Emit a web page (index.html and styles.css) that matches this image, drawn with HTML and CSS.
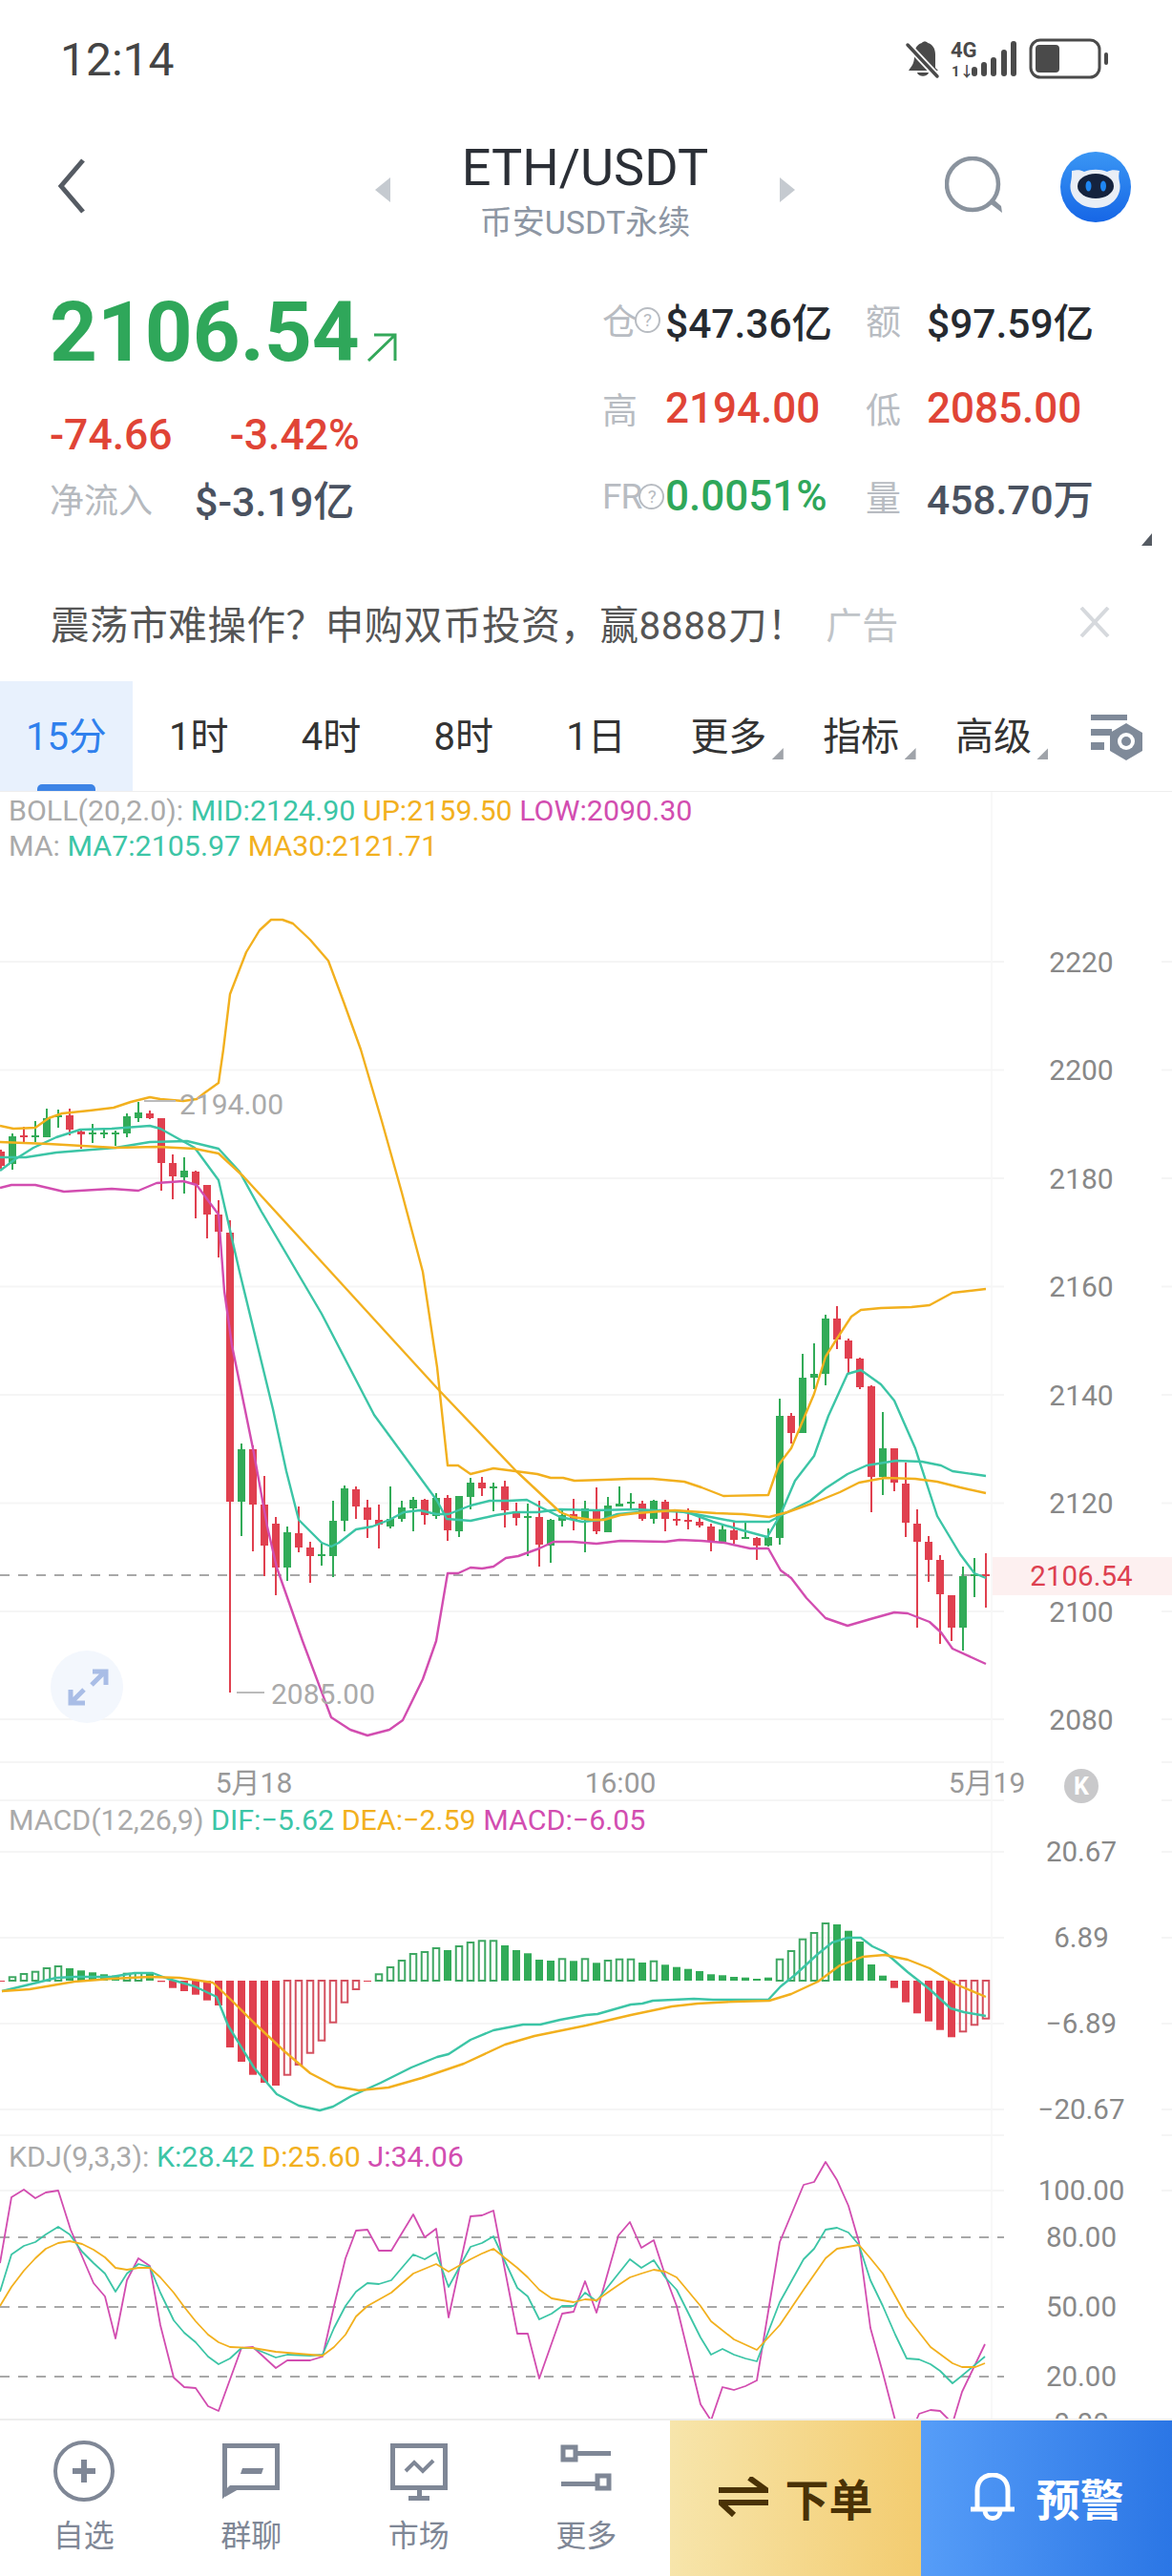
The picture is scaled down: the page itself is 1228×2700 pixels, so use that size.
FILE: index.html
```html
<!DOCTYPE html>
<html lang="zh-CN">
<head>
  <meta charset="UTF-8">
  <meta name="viewport" content="width=device-width, initial-scale=1.0">
  <link rel="stylesheet" href="styles.css">
  <title>ETH/USDT</title>
</head>
<body>
  <div class="page">
    <div class="status-bar">
      <span class="clock">12:14</span>
      <svg class="status-icons" width="215" height="46" viewBox="946 38 215 46">
        <path class="st-fill" d="M954 70c4-5 4-9 4-14 0-7 4-11 8-12 1-2 5-2 6 0 5 1 8 6 8 12v14l3 3h-31z"/>
        <path class="st-fill" d="M961 75h12c-1 5-11 5-12 0z"/>
        <path d="M951 46l31 33" stroke="#fff" stroke-width="7"/>
        <path d="M951 46l31 33" stroke="#4a4a4a" stroke-width="3.5" stroke-linecap="round"/>
        <text class="st-4g" x="996" y="59">4G</text>
        <text class="st-arrows" x="997" y="79">1↓</text>
        <rect class="st-fill" x="1018" y="69" width="6" height="10" rx="3"/>
        <rect class="st-fill" x="1028" y="64" width="6" height="15" rx="3"/>
        <rect class="st-fill" x="1038" y="59" width="6" height="20" rx="3"/>
        <rect class="st-fill" x="1049" y="51" width="6" height="28" rx="3"/>
        <rect class="st-fill" x="1059" y="42" width="6" height="37" rx="3"/>
        <rect x="1080" y="41" width="72" height="39" rx="10" fill="none" stroke="#4a4a4a" stroke-width="3"/>
        <rect class="st-fill" x="1085" y="46" width="25" height="29" rx="4"/>
        <rect class="st-fill" x="1157" y="54" width="4" height="13" rx="2"/>
      </svg>
    </div>

    <div class="nav">
      <svg class="nav-back" width="30" height="58" viewBox="0 0 30 58">
        <path d="M27 2L4 29l23 27" fill="none" stroke="#555b63" stroke-width="5"/>
      </svg>
      <div class="nav-center">
        <span class="tri tri-left"></span>
        <div class="nav-title">
          <div class="pair">ETH/USDT</div>
          <div class="market">币安USDT永续</div>
        </div>
        <span class="tri tri-right"></span>
      </div>
      <div class="nav-icons">
        <svg width="64" height="64" viewBox="0 0 64 64">
          <circle cx="29" cy="29" r="27" fill="none" stroke="#8a939e" stroke-width="4.5"/>
          <path d="M47 49l13 10-1-7-8-7z" fill="#8a939e"/>
        </svg>
        <svg width="74" height="74" viewBox="0 0 74 74">
          <defs>
            <linearGradient id="avatarBg" x1="0" y1="0" x2="0" y2="1">
              <stop offset="0" stop-color="#3a96f4"/>
              <stop offset="1" stop-color="#1666e6"/>
            </linearGradient>
          </defs>
          <circle cx="37" cy="37" r="37" fill="url(#avatarBg)"/>
          <path d="M12 20c6-1 9-1 13 1 7-3 17-3 24 0 4-2 8-2 13-1-1 4-1 7 0 12 3 12-6 27-25 27S8 44 11 32c1-5 1-8 1-12z" fill="#e9eef6"/>
          <ellipse cx="37" cy="36" rx="19" ry="13" fill="#15233e"/>
          <ellipse cx="29.500" cy="36" rx="3" ry="5.500" fill="#1f86f2"/>
          <ellipse cx="45" cy="36" rx="3" ry="5.500" fill="#1f86f2"/>
        </svg>
      </div>
    </div>

    <div class="summary">
      <div class="summary-left">
        <div class="price-row">
          <span class="price">2106.54</span>
          <svg width="32" height="30" viewBox="0 0 32 30">
            <path d="M2 29L30 2M8 2h22v27" fill="none" stroke="#34a85a" stroke-width="3"/>
          </svg>
        </div>
        <div class="change-row">
          <span class="change">-74.66</span>
          <span class="change">-3.42%</span>
        </div>
        <div class="flow-row">
          <span class="flow-label">净流入</span>
          <span class="flow-value">$-3.19亿</span>
        </div>
      </div>
      <div class="stats">
        <span class="stat-label">仓<i class="help">?</i></span><span class="stat-value dark">$47.36亿</span>
        <span class="stat-label">额</span><span class="stat-value dark">$97.59亿</span>
        <span class="stat-label">高</span><span class="stat-value red">2194.00</span>
        <span class="stat-label">低</span><span class="stat-value red">2085.00</span>
        <span class="stat-label fr">FR<i class="help">?</i></span><span class="stat-value green">0.0051%</span>
        <span class="stat-label">量</span><span class="stat-value slate">458.70万</span>
      </div>
      <span class="corner"></span>
    </div>

    <div class="banner">
      <span class="banner-text">震荡市难操作？申购双币投资，赢8888刀！</span>
      <span class="banner-ad">广告</span>
      <svg class="banner-close" width="32" height="32" viewBox="0 0 32 32">
        <path d="M2 1l28 30M30 1L2 31" stroke="#d6d9dd" stroke-width="4"/>
      </svg>
    </div>

    <div class="tabs">
      <span class="tab active">15分</span>
      <span class="tab">1时</span>
      <span class="tab">4时</span>
      <span class="tab">8时</span>
      <span class="tab">1日</span>
      <span class="tab more">更多</span>
      <span class="tab more">指标</span>
      <span class="tab more">高级</span>
      <svg class="tab-settings" width="56" height="50" viewBox="0 0 56 50">
        <path d="M0 0h38v6H0zM0 15h22v7H0zM0 29h14v8H0z" fill="#7f8a99"/>
        <path d="M37 9l17 10v19L37 48 20 38V19z" fill="#7f8a99"/>
        <circle cx="37" cy="28" r="9" fill="#fff"/>
        <circle cx="37" cy="28" r="5" fill="#7f8a99"/>
      </svg>
    </div>

    <svg id="chart" class="chart" width="1228" height="1705" viewBox="0 830 1228 1705">
      <g id="grid"></g>
      <g id="candles"></g>
      <g id="macd"></g>
      <g id="lines"></g>

      <text class="legend" x="9" y="860">BOLL(20,2.0): <tspan class="c-teal">MID:2124.90</tspan> <tspan class="c-yellow">UP:2159.50</tspan> <tspan class="c-pink">LOW:2090.30</tspan></text>
      <text class="legend" x="9" y="897">MA: <tspan class="c-teal">MA7:2105.97</tspan> <tspan class="c-yellow">MA30:2121.71</tspan></text>
      <text class="legend" x="9" y="1918">MACD(12,26,9) <tspan class="c-teal">DIF:−5.62</tspan> <tspan class="c-yellow">DEA:−2.59</tspan> <tspan class="c-pink">MACD:−6.05</tspan></text>
      <text class="legend" x="9" y="2271">KDJ(9,3,3): <tspan class="c-teal">K:28.42</tspan> <tspan class="c-yellow">D:25.60</tspan> <tspan class="c-pink">J:34.06</tspan></text>

      <path class="mark-dash" d="M151 1154h33M248 1774h29"/>
      <text class="mark" x="188" y="1168">2194.00</text>
      <text class="mark" x="284" y="1786">2085.00</text>

      <text class="axis" x="1133" y="1019">2220</text>
      <text class="axis" x="1133" y="1132">2200</text>
      <text class="axis" x="1133" y="1246">2180</text>
      <text class="axis" x="1133" y="1359">2160</text>
      <text class="axis" x="1133" y="1473">2140</text>
      <text class="axis" x="1133" y="1586">2120</text>
      <text class="axis" x="1133" y="1700">2100</text>
      <text class="axis" x="1133" y="1813">2080</text>

      <rect class="last-bg" x="1040" y="1632" width="188" height="40"/>
      <text class="last-price" x="1133" y="1662">2106.54</text>

      <text class="time" x="266" y="1879">5月18</text>
      <text class="time" x="650" y="1879">16:00</text>
      <text class="time" x="1034" y="1879">5月19</text>

      <circle cx="1133" cy="1872" r="18" fill="#c9c9cb"/>
      <text class="kbtn" x="1133" y="1881">K</text>

      <circle cx="91" cy="1768" r="38" fill="#f3f7fd"/>
      <path class="expand" d="M96 1766l14-14M97 1752h14v14M88 1771l-14 14M74 1771v14h15"/>

      <text class="axis-sm" x="1133" y="1951">20.67</text>
      <text class="axis-sm" x="1133" y="2041">6.89</text>
      <text class="axis-sm" x="1133" y="2131">−6.89</text>
      <text class="axis-sm" x="1133" y="2221">−20.67</text>

      <text class="axis-sm" x="1133" y="2306">100.00</text>
      <text class="axis-sm" x="1133" y="2355">80.00</text>
      <text class="axis-sm" x="1133" y="2428">50.00</text>
      <text class="axis-sm" x="1133" y="2501">20.00</text>
      <text class="axis-sm" x="1133" y="2550">0.00</text>
    </svg>

    <div class="footer">
      <div class="foot-item">
        <svg width="70" height="66" viewBox="0 0 70 66">
          <circle cx="35" cy="33" r="30" fill="none" stroke="#7f8796" stroke-width="4"/>
          <path d="M23 30h9v-9h6v9h9v6h-9v9h-6v-9h-9z" fill="#7f8796"/>
        </svg>
        <span>自选</span>
      </div>
      <div class="foot-item">
        <svg width="70" height="66" viewBox="0 0 70 66">
          <path d="M7.500 6.500h55v44H14l-6.500 6z" fill="none" stroke="#7f8796" stroke-width="5"/>
          <path d="M8 52h14l-14 8z" fill="#7f8796"/>
          <path d="M24 36h22l2-6H26z" fill="#7f8796"/>
        </svg>
        <span>群聊</span>
      </div>
      <div class="foot-item">
        <svg width="70" height="66" viewBox="0 0 70 66">
          <rect x="7.500" y="6.500" width="55" height="44" fill="none" stroke="#7f8796" stroke-width="5"/>
          <path d="M33 52h5v8h-5zM24 59h22v5H24z" fill="#7f8796"/>
          <path d="M21 33l9-9 9 9 11-11" fill="none" stroke="#7f8796" stroke-width="4"/>
        </svg>
        <span>市场</span>
      </div>
      <div class="foot-item">
        <svg width="70" height="66" viewBox="0 0 70 66">
          <rect x="11" y="8" width="13" height="13" fill="none" stroke="#7f8796" stroke-width="5"/>
          <path d="M26 12h35v5H26zM9 44h36v5H9z" fill="#7f8796"/>
          <rect x="47" y="38" width="12" height="13" fill="none" stroke="#7f8796" stroke-width="5"/>
        </svg>
        <span>更多</span>
      </div>
      <div class="foot-btn order">
        <svg width="52" height="42" viewBox="0 0 52 42">
          <path d="M0 14h50L32 1M52 27H2l14 13" fill="none" stroke="#4a3206" stroke-width="6"/>
        </svg>
        <span>下单</span>
      </div>
      <div class="foot-btn alert">
        <svg width="48" height="50" viewBox="0 0 48 50">
          <path d="M8 38V18C8 8 15 2 24 2s16 6 16 16v20" fill="none" stroke="#fff" stroke-width="5"/>
          <path d="M1 38h46" stroke="#fff" stroke-width="5"/>
          <path d="M16 40c1 10 15 10 16 0" fill="none" stroke="#fff" stroke-width="5"/>
        </svg>
        <span>预警</span>
      </div>
    </div>
  </div>

  <script src="chart.js"></script>
</body>
</html>
```

FILE: styles.css
```css
* {
  box-sizing: border-box;
}

body {
  margin: 0;
  background-color: #fff;
  font-family: Roboto, "Noto Sans CJK SC", sans-serif;
}

.page {
  display: flex;
  flex-direction: column;
  width: 1228px;
  height: 2700px;
  overflow: hidden;
}

/* status bar */
.status-bar {
  display: flex;
  align-items: center;
  justify-content: space-between;
  height: 124px;
  padding: 0 67px 0 63px;
  flex-shrink: 0;
}

.clock {
  font-size: 48px;
  color: #444;
}

.st-fill {
  fill: #4a4a4a;
}

.st-4g {
  font-size: 22px;
  font-weight: 700;
  fill: #4a4a4a;
}

.st-arrows {
  font-size: 15px;
  font-weight: 700;
  fill: #4a4a4a;
}

/* title row */
.nav {
  display: flex;
  align-items: center;
  height: 150px;
  padding-left: 60px;
  flex-shrink: 0;
}

.nav-back {
  margin-right: 303px;
  margin-top: -8px;
}

.nav-center {
  display: flex;
  align-items: center;
  justify-content: space-between;
  width: 440px;
}

.nav-title {
  text-align: center;
}

.pair {
  font-size: 54px;
  line-height: 60px;
  color: #2b2f36;
}

.market {
  font-size: 34px;
  line-height: 40px;
  margin-top: 7px;
  color: #8d96a3;
}

.tri {
  width: 0;
  height: 0;
  border-top: 13px solid transparent;
  border-bottom: 13px solid transparent;
}

.tri-left {
  border-right: 16px solid #c5cad0;
}

.tri-right {
  border-left: 16px solid #c5cad0;
}

.nav-icons {
  display: flex;
  align-items: center;
  gap: 57px;
  margin-left: 157px;
  margin-top: -6px;
}

/* price summary */
.summary {
  position: relative;
  display: flex;
  height: 326px;
  padding: 34px 0 0 52px;
  flex-shrink: 0;
}

.summary-left {
  width: 579px;
}

.price-row {
  display: flex;
  align-items: flex-end;
  height: 80px;
  gap: 7px;
}

.price {
  font-size: 87px;
  line-height: 80px;
  font-weight: 700;
  color: #2fa75a;
}

.price-row svg {
  margin-bottom: 9px;
}

.change-row {
  display: flex;
  gap: 60px;
  margin-top: 43px;
}

.change {
  font-size: 44.500px;
  line-height: 50px;
  font-weight: 500;
  color: #e04436;
}

.flow-row {
  display: flex;
  align-items: center;
  gap: 44px;
  margin-top: 16px;
  height: 50px;
}

.flow-label {
  font-size: 36px;
  color: #b5b9be;
}

.flow-value {
  font-size: 43px;
  font-weight: 500;
  color: #4a5260;
}

.stats {
  display: grid;
  grid-template-columns: 66px 210px 64px auto;
  grid-auto-rows: 50px;
  row-gap: 42.500px;
  align-items: center;
  padding-top: 2px;
}

.stat-label {
  display: flex;
  align-items: center;
  font-size: 37px;
  color: #b8bcc2;
}

.stat-label.fr {
  letter-spacing: -1px;
}

.help {
  display: inline-flex;
  align-items: center;
  justify-content: center;
  width: 27px;
  height: 27px;
  margin-left: -3px;
  flex-shrink: 0;
  border: 2px solid #b8bcc2;
  border-radius: 50%;
  font-size: 19px;
  font-style: normal;
}

.stat-value {
  font-size: 44px;
  font-weight: 500;
  white-space: nowrap;
}

.stat-value.dark {
  font-size: 42.500px;
  color: #262a30;
}

.stat-value.red {
  color: #e04436;
}

.stat-value.green {
  color: #2fa75a;
}

.stat-value.slate {
  font-size: 42.500px;
  color: #4a5260;
}

.corner {
  position: absolute;
  left: 1196px;
  top: 285px;
  width: 11px;
  height: 13px;
  background-color: #555b63;
  clip-path: polygon(100% 0, 100% 100%, 0 100%);
}

/* ad banner */
.banner {
  display: flex;
  align-items: center;
  height: 114px;
  padding: 0 65px 10px 53px;
  flex-shrink: 0;
}

.banner-text {
  font-size: 40.500px;
  letter-spacing: 0.600px;
  color: #555;
  white-space: nowrap;
}

.banner-ad {
  margin-left: 20px;
  font-size: 38px;
  color: #c0c4c8;
}

.banner-close {
  margin-left: auto;
}

/* period tabs */
.tabs {
  display: flex;
  align-items: stretch;
  height: 116px;
  border-bottom: 1px solid #eee;
  flex-shrink: 0;
}

.tab {
  position: relative;
  display: flex;
  align-items: center;
  justify-content: center;
  width: 138.800px;
  padding-bottom: 5px;
  font-size: 40px;
  color: #333;
}

.tab.active {
  background-color: #e8f1fd;
  color: #2f80ed;
}

.tab.active::after {
  content: "";
  position: absolute;
  left: 39px;
  bottom: 0;
  width: 61px;
  height: 7px;
  border-radius: 5px 5px 0 0;
  background-color: #3d84e6;
}

.tab.more::after {
  content: "";
  position: absolute;
  right: 12px;
  bottom: 33px;
  width: 12px;
  height: 12px;
  background-color: #a0a4aa;
  clip-path: polygon(100% 0, 100% 100%, 0 100%);
}

.tab-settings {
  align-self: center;
  margin-left: 33px;
  margin-top: 5px;
}

/* chart */
.chart {
  display: block;
  flex-shrink: 0;
}

.grid-line {
  stroke: #f5f5f5;
  stroke-width: 2;
}

.axis-line {
  stroke: #f6f6f6;
  stroke-width: 1.500;
}

.dash-line {
  stroke: #a8a8a8;
  stroke-width: 2;
  stroke-dasharray: 10 9;
}

.wick {
  stroke-width: 2;
}

.up {
  fill: #32ab58;
  stroke: #32ab58;
}

.down {
  fill: #e0404f;
  stroke: #e0404f;
}

.hollow {
  fill: none;
  stroke-width: 2;
}

.up.hollow {
  fill: none;
  stroke: #3fa863;
}

.down.hollow {
  fill: none;
  stroke: #d4505f;
}

.line {
  fill: none;
  stroke-width: 2.400;
  stroke-linejoin: round;
}

.line.thin {
  stroke-width: 1.800;
}

.teal {
  stroke: #3cc5a6;
}

.yellow {
  stroke: #f2b01e;
}

.pink {
  stroke: #d24db0;
}

.legend {
  font-size: 30.400px;
  fill: #aaa;
}

.c-teal {
  fill: #3cc5a6;
}

.c-yellow {
  fill: #f2b01e;
}

.c-pink {
  fill: #d24db0;
}

.mark {
  font-size: 30px;
  fill: #aaa;
}

.mark-dash {
  stroke: #bbb;
  stroke-width: 2;
}

.axis {
  font-size: 30px;
  fill: #888;
  text-anchor: middle;
}

.axis-sm {
  font-size: 29.500px;
  fill: #888;
  text-anchor: middle;
}

.last-bg {
  fill: #fdf0f0;
}

.last-price {
  font-size: 29.500px;
  fill: #dd4150;
  text-anchor: middle;
}

.time {
  font-size: 30px;
  fill: #999;
  text-anchor: middle;
}

.kbtn {
  font-size: 25px;
  font-weight: 700;
  fill: #fff;
  text-anchor: middle;
}

.expand {
  fill: none;
  stroke: #a9bde6;
  stroke-width: 5;
}

/* bottom bar */
.footer {
  display: flex;
  height: 165px;
  flex-shrink: 0;
  border-top: 2px solid #eee;
}

.foot-item {
  display: flex;
  flex-direction: column;
  align-items: center;
  width: 175.500px;
  padding-top: 20px;
  font-size: 32px;
  line-height: 40px;
  color: #7f8796;
}

.foot-item span {
  margin-top: 15px;
}

.foot-btn {
  display: flex;
  align-items: center;
  justify-content: center;
  width: 263px;
  padding-bottom: 4px;
  font-weight: 700;
}

.order {
  gap: 18px;
  font-size: 46px;
  color: #4a3206;
  background-image: linear-gradient(to right, #f7e5ab, #f3cc70);
}

.alert {
  gap: 22px;
  font-size: 46px;
  color: #fff;
  background-image: linear-gradient(to right, #569df8, #2b76e5);
}
```

FILE: chart.js
```js
var svgNS = 'http://www.w3.org/2000/svg';

// x position of candle number i, every candle is 12px apart
function slotX(i) {
  return 1 + 12 * i;
}

function addEl(parent, tag, attrs) {
  var el = document.createElementNS(svgNS, tag);
  for (var key in attrs) {
    el.setAttribute(key, attrs[key]);
  }
  parent.appendChild(el);
  return el;
}

// Grid lines
var grid = document.getElementById('grid');
var gridRows = [1008, 1121.5, 1235, 1348.5, 1462, 1575.5, 1689, 1802, 1847, 1887, 1941, 2031, 2121, 2211, 2238, 2296, 2540];
gridRows.forEach(function (y) {
  addEl(grid, 'path', { class: 'grid-line', d: 'M0 ' + y + 'H1052M1217 ' + y + 'H1228' });
});
addEl(grid, 'path', { class: 'axis-line', d: 'M1039 830V2535' });
[1651, 2345, 2418, 2491].forEach(function (y, n) {
  addEl(grid, 'path', { class: 'dash-line', d: 'M0 ' + y + 'H' + (n === 0 ? 1038 : 1052) });
});

// Candles: wick top, wick bottom, body top, body bottom, colour
var candles = [
  [1205, 1225, 1207, 1222, 'd'], [1188, 1226, 1191, 1220, 'u'], [1181, 1197, 1190, 1192, 'd'],
  [1175, 1197, 1190, 1192, 'u'], [1162, 1192, 1172, 1192, 'u'], [1163, 1182, 1169, 1171, 'u'],
  [1162, 1190, 1169, 1184, 'd'], [1185, 1204, 1186, 1189, 'd'], [1178, 1198, 1187, 1189, 'u'],
  [1183, 1193, 1187, 1189, 'u'], [1185, 1201, 1187, 1189, 'u'], [1167, 1192, 1170, 1188, 'u'],
  [1155, 1176, 1166, 1172, 'u'], [1164, 1173, 1167, 1172, 'd'], [1172, 1248, 1172, 1219, 'd'],
  [1210, 1257, 1219, 1233, 'd'], [1213, 1251, 1227, 1234, 'u'], [1227, 1277, 1228, 1242, 'd'],
  [1242, 1298, 1242, 1273, 'd'], [1258, 1318, 1273, 1291, 'd'], [1279, 1774, 1292, 1574, 'd'],
  [1513, 1610, 1519, 1574, 'u'], [1515, 1626, 1519, 1577, 'd'], [1547, 1652, 1577, 1620, 'd'],
  [1590, 1672, 1597, 1643, 'd'], [1600, 1657, 1606, 1643, 'u'], [1579, 1627, 1607, 1622, 'd'],
  [1616, 1659, 1622, 1631, 'd'], [1618, 1641, 1629, 1631, 'u'], [1573, 1653, 1594, 1631, 'u'],
  [1557, 1605, 1560, 1594, 'u'], [1558, 1592, 1561, 1579, 'd'], [1572, 1612, 1580, 1593, 'd'],
  [1577, 1623, 1593, 1598, 'd'], [1558, 1602, 1592, 1600, 'u'], [1573, 1595, 1580, 1592, 'u'],
  [1569, 1605, 1572, 1581, 'u'], [1571, 1598, 1572, 1588, 'd'], [1565, 1592, 1570, 1589, 'u'],
  [1567, 1615, 1570, 1604, 'd'], [1568, 1611, 1568, 1605, 'u'], [1549, 1582, 1554, 1569, 'u'],
  [1548, 1568, 1554, 1560, 'd'], [1554, 1584, 1558, 1560, 'u'], [1552, 1601, 1558, 1583, 'd'],
  [1575, 1599, 1584, 1591, 'd'], [1576, 1631, 1589, 1591, 'u'], [1573, 1642, 1590, 1619, 'd'],
  [1592, 1638, 1593, 1620, 'u'], [1583, 1600, 1588, 1594, 'u'], [1571, 1604, 1587, 1593, 'd'],
  [1573, 1627, 1581, 1593, 'u'], [1559, 1608, 1582, 1605, 'd'], [1569, 1606, 1578, 1606, 'u'],
  [1558, 1579, 1576, 1579, 'u'], [1565, 1582, 1574, 1576, 'u'], [1573, 1594, 1576, 1592, 'd'],
  [1572, 1597, 1573, 1592, 'u'], [1572, 1605, 1574, 1592, 'd'], [1584, 1599, 1592, 1594, 'd'],
  [1581, 1603, 1593, 1595, 'd'], [1590, 1601, 1595, 1599, 'd'], [1597, 1626, 1600, 1615, 'd'],
  [1598, 1618, 1603, 1616, 'u'], [1595, 1618, 1604, 1614, 'd'], [1595, 1613, 1611, 1613, 'u'],
  [1611, 1635, 1612, 1620, 'd'], [1602, 1621, 1611, 1620, 'u'], [1466, 1619, 1484, 1612, 'u'],
  [1481, 1513, 1484, 1502, 'd'], [1419, 1502, 1444, 1502, 'u'], [1408, 1456, 1440, 1444, 'u'],
  [1378, 1452, 1382, 1440, 'u'], [1369, 1414, 1382, 1404, 'd'], [1403, 1440, 1405, 1424, 'd'],
  [1423, 1456, 1424, 1454, 'd'], [1452, 1585, 1453, 1548, 'd'], [1480, 1567, 1518, 1548, 'u'],
  [1518, 1563, 1518, 1554, 'd'], [1533, 1611, 1555, 1596, 'd'], [1582, 1706, 1597, 1616, 'd'],
  [1610, 1658, 1616, 1635, 'd'], [1630, 1723, 1635, 1671, 'd'], [1672, 1720, 1672, 1706, 'd'],
  [1642, 1730, 1652, 1706, 'u'], [1633, 1674, 1650, 1652, 'u'], [1628, 1685, 1650, 1652, 'd']
];

var candleGroup = document.getElementById('candles');
candles.forEach(function (c, i) {
  var x = slotX(i);
  var cls = c[4] === 'u' ? 'up' : 'down';
  addEl(candleGroup, 'path', { class: cls + ' wick', d: 'M' + x + ' ' + c[0] + 'V' + c[1] });
  addEl(candleGroup, 'rect', { class: cls, x: x - 4, y: c[2], width: 8, height: c[3] - c[2], 'stroke-width': 0 });
});

// MACD bars from the zero line at 2076, negative is down. h means hollow
var macdBars = [
  -1, '3.7h', '7h', '9.3h', '13h', '15h', 13, 10.7, 8.7, 6.7, 5.3, '7.3h', '8h', 7.3,
  -1.3, -7.7, -11, -14.7, -20.7, -26, -70, -85, -98.7, -107, -110,
  '-98.7h', '-88h', '-75.7h', '-62.7h', '-43.7h', '-22.7h', '-9h', -1,
  '6.7h', '14h', '21h', '28h', '30h', '34h', 32, '36h', '40h', '41.7h', '41.7h',
  37, 32, 28.7, 22, 21, '22.7h', 20.7, '22.7h', 18.7, '21h', '22.3h', '22.3h', 19, '20.3h',
  16.7, 14.3, 12.3, 10, 6.7, 5.7, 4, 3.3, 2, 3.3,
  '22.3h', '31h', '43.3h', '50h', '60h', 59, 52.3, 41, 17, 5.3,
  -7.7, -22.7, -34.3, -42.7, -51.7, -59.3, '-53.3h', '-46.3h', '-39.7h'
];

var macdGroup = document.getElementById('macd');
var zeroY = 2076;
macdBars.forEach(function (bar, i) {
  var hollow = typeof bar === 'string';
  var value = parseFloat(bar);
  var cls = value > 0 ? 'up' : 'down';
  var h = Math.abs(value);
  var y = value > 0 ? zeroY - h : zeroY;
  if (hollow) {
    addEl(macdGroup, 'rect', { class: cls + ' hollow', x: slotX(i) - 3.25, y: y, width: 6.5, height: h });
  } else {
    addEl(macdGroup, 'rect', { class: cls, x: slotX(i) - 4, y: y, width: 8, height: h, 'stroke-width': 0 });
  }
});

// Indicator lines, traced points in chart pixels
var lines = [
  // BOLL
  ['yellow', '0,1180 14,1183 37,1182 51,1172 65,1167 94,1164 119,1161 137,1155 157,1150 168,1152 192,1154 206,1152 215,1145 229,1135 234,1100 241,1042 258,998 272,975 284,964 296,964 307,968 325,985 344,1007 360,1050 378,1100 400,1175 421,1250 443,1333 458,1433 469,1536 480,1536 493,1545 517,1539 540,1542 563,1545 577,1549 590,1549 602,1552 633,1551 660,1550 684,1550 717,1553 735,1559 758,1568 805,1567 816,1535 829,1518 853,1461 865,1422 877,1403 892,1380 902,1373 923,1371 955,1370 974,1368 998,1355 1033,1351'],
  ['teal', '0,1213 27,1213 59,1208 121,1203 157,1197 196,1196 229,1204 251,1228 274,1270 337,1377 392,1483 458,1573 468,1592 493,1594 520,1588 540,1585 563,1585 587,1582 623,1583 667,1582 700,1584 712,1584 739,1589 771,1595 806,1595 821,1587 849,1573 865,1560 888,1545 908,1536 939,1531 966,1532 986,1536 998,1542 1033,1547'],
  ['pink', '0,1245 12,1242 37,1242 67,1249 117,1246 145,1248 164,1240 192,1238 206,1242 229,1273 235,1353 243,1410 266,1523 280,1600 290,1643 317,1720 347,1800 367,1813 385,1819 408,1813 422,1803 443,1760 457,1720 469,1649 480,1649 493,1643 505,1644 517,1642 530,1633 543,1631 565,1623 580,1616 600,1616 625,1618 650,1615 697,1616 712,1614 735,1615 759,1617 786,1623 805,1623 818,1646 829,1654 845,1675 865,1696 888,1704 912,1697 937,1690 951,1691 974,1700 986,1711 998,1728 1033,1744'],
  // MA
  ['teal', '0,1227 16,1215 35,1203 59,1192 84,1184 117,1183 157,1180 168,1183 204,1203 229,1237 251,1333 286,1477 300,1542 313,1593 325,1605 337,1617 347,1621 355,1617 373,1603 390,1600 408,1593 423,1585 440,1583 457,1587 470,1587 493,1578 513,1573 533,1573 552,1572 567,1580 587,1590 610,1595 630,1593 647,1587 692,1583 720,1585 747,1595 778,1604 804,1611 818,1587 833,1552 853,1526 868,1484 888,1440 902,1436 923,1451 937,1468 959,1518 982,1589 1006,1629 1021,1649 1033,1654'],
  ['yellow', '0,1197 51,1199 121,1203 165,1202 204,1204 229,1209 255,1233 341,1327 458,1455 541,1542 587,1585 600,1590 620,1593 633,1593 650,1588 667,1586 707,1583 750,1586 778,1587 806,1590 825,1585 853,1575 880,1564 900,1554 927,1549 959,1550 982,1553 1006,1559 1033,1565'],
  // MACD
  ['teal', '2,2087 39,2078 59,2073 78,2072 117,2072 141,2068 160,2068 176,2074 204,2082 227,2093 239,2123 266,2167 290,2195 313,2207 335,2212 349,2208 368,2197 399,2183 431,2167 458,2156 470,2153 493,2138 517,2128 548,2122 566,2122 587,2117 614,2112 626,2111 661,2101 673,2100 684,2097 727,2095 747,2096 805,2096 818,2082 833,2070 857,2048 872,2036 888,2031 902,2031 914,2040 927,2046 951,2067 974,2085 996,2105 1010,2109 1033,2113'],
  ['yellow', '2,2087 31,2085 78,2077 117,2074 157,2072 188,2073 223,2078 243,2097 266,2120 298,2150 325,2173 352,2187 376,2191 407,2188 442,2178 486,2163 529,2143 560,2134 614,2123 661,2112 704,2103 731,2100 770,2098 806,2097 829,2090 857,2077 880,2060 904,2051 927,2049 951,2054 974,2063 1002,2080 1033,2093'],
  // KDJ
  ['pink thin', '0,2372 12,2303 25,2295 37,2304 48,2298 61,2296 74,2337 98,2393 110,2407 121,2451 133,2390 145,2367 157,2375 168,2437 182,2492 193,2502 205,2503 218,2522 229,2527 253,2461 265,2460 289,2482 301,2474 325,2474 338,2470 350,2417 362,2367 373,2338 385,2337 397,2359 410,2359 433,2321 445,2345 457,2336 470,2429 493,2323 505,2322 517,2317 542,2446 553,2446 565,2493 589,2425 601,2423 613,2391 625,2424 648,2343 660,2329 672,2356 685,2348 697,2385 709,2417 734,2520 745,2537 757,2502 769,2505 781,2501 793,2495 817,2350 842,2290 853,2287 865,2266 877,2285 889,2312 900,2350 912,2440 925,2487 938,2537 950,2560 963,2530 975,2526 985,2527 998,2540 1008,2507 1032,2457'],
  ['teal thin', '0,2402 12,2363 25,2354 37,2350 48,2342 61,2334 73,2342 86,2360 98,2372 110,2383 121,2402 133,2383 145,2373 157,2376 168,2403 182,2432 193,2445 205,2455 218,2470 229,2478 241,2472 253,2461 265,2461 289,2471 301,2468 325,2469 338,2468 350,2440 362,2417 373,2402 385,2393 397,2394 410,2390 433,2363 445,2368 457,2361 470,2397 493,2355 505,2351 517,2344 542,2398 553,2407 565,2431 578,2425 589,2417 601,2417 613,2403 625,2412 648,2383 660,2368 672,2377 685,2369 697,2387 709,2400 734,2450 745,2468 757,2462 769,2468 781,2472 793,2475 817,2413 842,2368 853,2357 865,2337 877,2335 889,2340 900,2353 912,2390 925,2417 938,2447 950,2472 963,2473 975,2478 985,2485 998,2498 1008,2490 1032,2470'],
  ['yellow thin', '0,2417 12,2397 25,2380 37,2367 48,2357 61,2351 73,2349 86,2352 98,2358 110,2366 121,2377 133,2379 145,2377 157,2377 168,2387 182,2403 193,2418 205,2433 218,2447 229,2455 241,2460 265,2461 289,2465 325,2468 338,2469 350,2460 362,2447 373,2428 385,2417 410,2403 433,2383 445,2378 457,2373 470,2381 493,2368 505,2362 517,2357 542,2377 553,2387 565,2400 578,2409 589,2411 601,2413 613,2410 625,2411 648,2395 660,2387 672,2383 685,2379 697,2381 709,2387 734,2417 745,2433 769,2452 793,2463 817,2437 842,2400 865,2367 877,2357 900,2353 912,2367 925,2383 950,2428 975,2460 998,2477 1008,2481 1022,2481 1032,2477']
];

var lineGroup = document.getElementById('lines');
lines.forEach(function (l) {
  addEl(lineGroup, 'polyline', { class: 'line ' + l[0], points: l[1] });
});
```
